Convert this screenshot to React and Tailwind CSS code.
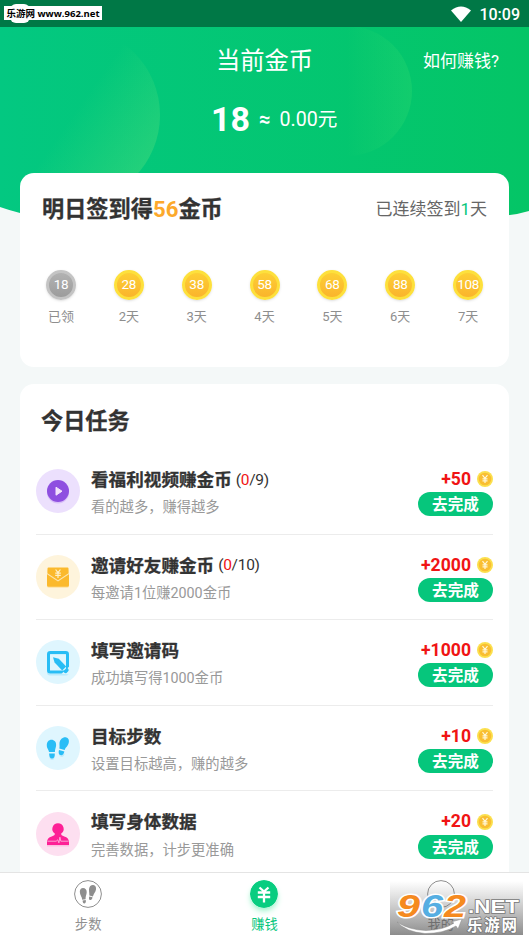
import React from "react";

const days = [
  { coins: 18, label: "已领", claimed: true },
  { coins: 28, label: "2天" },
  { coins: 38, label: "3天" },
  { coins: 58, label: "4天" },
  { coins: 68, label: "5天" },
  { coins: 88, label: "6天" },
  { coins: 108, label: "7天" },
];

const PlayIcon = () => (
  <svg viewBox="0 0 44 44" className="w-11 h-11">
    <circle cx="22" cy="22" r="22" fill="#ece0fd" />
    <circle cx="22" cy="23.5" r="11" fill="#d9bff8" />
    <circle cx="22" cy="22" r="11" fill="#8e4fe0" />
    <path d="M20 18.200v8l6-4z" fill="#f3e2fc" stroke="#f3e2fc" strokeLinejoin="round" />
  </svg>
);

const EnvelopeIcon = () => (
  <svg viewBox="0 0 44 44" className="w-11 h-11">
    <circle cx="22" cy="22" r="22" fill="#fef4dc" />
    <rect x="11" y="14" width="22" height="19" rx="2" fill="#fde6b0" />
    <path d="M12.500 12.500h19q1 0 1 1v4.800L22 25.200l-10.500-6.900v-4.800q0-1 1-1z" fill="#fbb92c" />
    <path d="M11 19.200l11 7.200 11-7.200v11q0 1.500-1.500 1.500h-19q-1.500 0-1.500-1.500z" fill="#fbb92c" />
    <path d="M19.600 14.500l2.400 3.200 2.400-3.200M22 17.700v5.400M19.200 18.200h5.600M19.200 20.400h5.600" fill="none" stroke="#fff0c8" strokeWidth="1.200" />
  </svg>
);

const EditIcon = () => (
  <svg viewBox="0 0 44 44" className="w-11 h-11">
    <circle cx="22" cy="22" r="22" fill="#dff6fe" />
    <rect x="12" y="13.5" width="20" height="21" rx="2" fill="none" stroke="#b9eafc" strokeWidth="2" />
    <rect x="12.5" y="12.5" width="19" height="19.5" rx="1.800" fill="none" stroke="#28bdf5" strokeWidth="3" />
    <path d="M25.500 33.800l8.500-8 1 9z" fill="#dff6fe" />
    <path d="M17 17.300l5.800 1.500 7.400 7.800-4 3.900-7.600-7.900z" fill="#28bdf5" />
    <path d="M27 31.500l4-3.900 1.300 1.400q1 1.200-.3 2.600l-1.200 1.100q-1.300 1.100-2.400.1z" fill="#28bdf5" />
  </svg>
);

const StepsIcon = () => (
  <svg viewBox="0 0 44 44" className="w-11 h-11">
    <circle cx="22" cy="22" r="22" fill="#dff6fe" />
    <path d="M13.200 30l5.400-.3c.2 2.700-.7 4.400-2.500 4.400s-2.700-1.600-2.900-4.100zM23.600 26.500l5.100 1.200c-.6 2.400-1.900 3.600-3.600 3.100-1.800-.5-2.100-2.100-1.500-4.300z" fill="#bdebfc" />
    <g fill="#29bdf6">
      <path d="M10.800 19.200c0-3.300 2-5.400 4.700-5.400s4.900 2.200 4.600 5.600c-.3 2.800-1.200 3.800-1.200 6.500l-5.900.2c-.1-2.500-2.200-3.400-2.200-6.900z" />
      <path d="M13.100 27.600l5.700-.2c.2 3.200-.9 5.200-2.800 5.200s-2.800-1.900-2.900-5z" />
      <path d="M23.500 16.700c.5-3.500 3.400-6 6.400-5.500 2.600.5 3.600 3 2.800 5.700-1.100 3.700-3.300 4.300-4 7.200l-5.400-1.500c.6-2.500 0-3.400.2-5.900z" />
      <path d="M23 24l5.400 1.500c-.6 2.900-2.200 4.200-4 3.600-1.800-.5-2.100-2.500-1.400-5.100z" />
    </g>
  </svg>
);

const BodyIcon = () => (
  <svg viewBox="0 0 44 44" className="w-11 h-11">
    <circle cx="22" cy="22" r="22" fill="#fddff0" />
    <path d="M11 30h22v4.500H11z" fill="#fcbfe0" />
    <path d="M22 11.200a5.700 5.700 0 0 1 3.200 10.400c-.2 1.500.6 2.100 3.100 2.800 3 .9 4.700 2.800 4.700 5.900v2.700H11v-2.700c0-3.100 1.700-5 4.700-5.900 2.500-.7 3.300-1.300 3.100-2.800A5.700 5.700 0 0 1 22 11.200z" fill="#fd2196" />
    <path d="M11.500 29.200h8.700l1.500-1.400 1.200 3 1-5.600.9 4h7.700" fill="none" stroke="#fdc4e2" strokeWidth=".8" />
  </svg>
);

const tasks = [
  { icon: PlayIcon, title: "看福利视频赚金币", total: 9, desc: "看的越多，赚得越多", reward: 50 },
  { icon: EnvelopeIcon, title: "邀请好友赚金币", total: 10, desc: "每邀请1位赚2000金币", reward: 2000 },
  { icon: EditIcon, title: "填写邀请码", desc: "成功填写得1000金币", reward: 1000 },
  { icon: StepsIcon, title: "目标步数", desc: "设置目标越高，赚的越多", reward: 10 },
  { icon: BodyIcon, title: "填写身体数据", desc: "完善数据，计步更准确", reward: 20 },
];

const SmallCoin = () => (
  <svg viewBox="0 0 16 16" className="w-4 h-4">
    <circle cx="8" cy="8" r="8" fill="#fbe04e" />
    <circle cx="8" cy="8" r="6.300" fill="#f9be32" />
    <path d="M5.500 4.200L8 7.300l2.500-3.100M8 7.300v4.700M5.500 7.900h5M5.500 9.800h5" fill="none" stroke="#fff7d8" strokeWidth="1.200" />
  </svg>
);

const DayCoin = ({ coins, label, claimed }) => (
  <div className="flex-1 flex flex-col items-center">
    <div
      className={`w-[30px] h-[30px] rounded-full border-[3px] flex items-center justify-center text-[13.500px] tracking-[-0.3px] leading-none text-white shadow-sm ${
        claimed
          ? "border-[#c4c4c4] bg-linear-to-b from-[#b2b2b2] to-[#9c9c9c]"
          : "border-[#fde03c] bg-linear-to-b from-[#fdcf35] to-[#fab42c]"
      }`}
    >
      {coins}
    </div>
    <span className="mt-[7px] text-[13px] leading-5 text-[#8e8e8e]">{label}</span>
  </div>
);

const TaskRow = ({ icon: Icon, title, total, desc, reward }) => (
  <div className="h-[85.600px] shrink-0 flex items-center border-b border-[#ececec]">
    <Icon />
    <div className="ml-[11px] flex-1 pt-1">
      <div className="h-6 flex items-center whitespace-nowrap text-[#333]">
        <span className="text-[17.600px] font-bold [-webkit-text-stroke:0.3px]">{title}</span>
        {total && (
          <span className="ml-1 text-[15.500px] tracking-[-0.3px]">
            (<span className="text-[#f01414]">0</span>/{total})
          </span>
        )}
      </div>
      <p className="mt-1 h-[22px] text-[14.300px] leading-[22px] text-[#999]">{desc}</p>
    </div>
    <div className="flex flex-col items-end pt-px">
      <div className="h-6 flex items-center gap-1.5">
        <span className="text-[17.600px] font-bold text-[#f01414]">+{reward}</span>
        <SmallCoin />
      </div>
      <button className="mt-px w-[75px] h-6 rounded-full bg-[#06c67c] text-white text-[15.600px] leading-[26px] font-bold">
        去完成
      </button>
    </div>
  </div>
);

const Header = () => (
  <header className="relative h-[190px] text-white">
    <svg viewBox="0 0 529 190" className="absolute inset-0 w-full h-[190px]">
      <defs>
        <linearGradient id="bg" x1="0" x2="1">
          <stop offset="0" stopColor="#03c881" />
          <stop offset="1" stopColor="#04c566" />
        </linearGradient>
        <linearGradient id="disc" x1=".5" y1=".4" x2="1" y2=".75">
          <stop offset=".1" stopColor="#50dd7c" stopOpacity="0" />
          <stop offset="1" stopColor="#50dd7c" stopOpacity=".45" />
        </linearGradient>
        <linearGradient id="disc2" x1=".5" x2="1">
          <stop offset="0" stopColor="#34dc70" stopOpacity="0" />
          <stop offset="1" stopColor="#34dc70" stopOpacity=".3" />
        </linearGradient>
      </defs>
      <path d="M0 0H529V184Q509 190 480 190H40Q20 187 0 180z" fill="url(#bg)" />
      <circle cx="72" cy="88" r="88" fill="url(#disc)" />
      <circle cx="347" cy="64" r="65" fill="url(#disc2)" />
    </svg>
    <div className="relative grid grid-cols-3 items-center pt-[19px]">
      <h1 className="col-start-2 text-center text-[24.300px] leading-[30px]">当前金币</h1>
      <a className="pr-[30px] text-right text-[17px] leading-[30px]">如何赚钱?</a>
    </div>
    <div className="relative mt-[23px] h-10 pl-[211px] flex items-center">
      <span className="text-[34px] font-bold">18</span>
      <span className="ml-[9px] text-xl font-bold">≈</span>
      <span className="ml-[9px] pt-0.5 text-[19.600px]">0.00元</span>
    </div>
  </header>
);

const TabBar = () => (
  <nav className="h-[69px] shrink-0 bg-white border-t border-[#e4e4e4] flex text-[13.300px] text-[#909090]">
    <div className="flex-1 pt-[7px] flex flex-col items-center">
      <svg viewBox="0 0 28 28" className="w-7 h-7" fill="#8e8e8e">
        <circle cx="14" cy="14" r="13.400" fill="white" stroke="#8e8e8e" />
        <path d="M5.800 11.800c0-2.300 1.300-3.800 3.200-3.800 2.300 0 3.900 1.700 3.700 4.200-.1 2.700-1.300 3.800-1.100 7l-3.400.5c0-3-2.400-4.300-2.400-7.900zM8.600 20.400l3.100-.5c.5 1.900 0 3.200-1.200 3.500-1.200.2-1.800-.9-1.900-3zM15 9.200c.2-2.900 2.100-4.400 4.300-4.200 2.200.2 3 2.100 2.700 4.400-.5 3.200-2.500 4.100-3.100 7l-3.600-1c.2-2.300-.4-3.600-.3-6.200zM15.200 16.400l3.300.9c-.3 2.100-1.200 3.100-2.500 2.700-1.200-.3-1.200-1.900-.8-3.600z" />
      </svg>
      <span className="mt-[7px] leading-5">步数</span>
    </div>
    <div className="flex-1 pt-[7px] flex flex-col items-center text-[#06c67c]">
      <svg viewBox="0 0 28 28" className="w-7 h-7 rounded-full shadow-md shadow-emerald-200">
        <circle cx="14" cy="14" r="14" fill="#08cd80" />
        <path d="M9.500 7.500l4.500 4 4.500-4M14 11.500v11M7.800 12.500h12.400M7.800 17h12.400" fill="none" stroke="white" strokeWidth="2.300" />
      </svg>
      <span className="mt-[7px] leading-5">赚钱</span>
    </div>
    <div className="flex-1 pt-[7px] flex flex-col items-center">
      <svg viewBox="0 0 28 28" className="w-7 h-7">
        <circle cx="14" cy="14" r="13.400" fill="white" stroke="#8e8e8e" />
      </svg>
      <span className="mt-[7px] leading-5 text-[#666]">我的</span>
    </div>
  </nav>
);

const SiteLogo = () => (
  <svg viewBox="0 0 139 60" className="absolute left-[390px] top-[875px] w-[139px] h-[60px]">
    <defs>
      <linearGradient id="shade" x1="0" x2="0" y1="0" y2="1">
        <stop offset=".1" stopColor="#808080" stopOpacity="0" />
        <stop offset="1" stopColor="#707070" stopOpacity=".8" />
      </linearGradient>
    </defs>
    <rect width="133" height="60" fill="url(#shade)" />
    <path d="M7 47q12 8 29 8.500 18-.5 28-7.500l-3-1 11-3-4 10-2-3q-12 7.500-31 7.500-19-1.500-28-11.500z" fill="white" stroke="#888" strokeWidth=".5" />
    <g
      fontFamily="Liberation Sans"
      fontWeight="bold"
      fontStyle="italic"
      fontSize="32"
      paintOrder="stroke"
    >
      <g stroke="white" strokeWidth="3">
        <text x="7" y="42" textLength="23" lengthAdjust="spacingAndGlyphs" fill="#f58a1f">9</text>
        <text x="31" y="42" textLength="22" lengthAdjust="spacingAndGlyphs" fill="#55aee2">6</text>
        <text x="54" y="42" textLength="22" lengthAdjust="spacingAndGlyphs" fill="#f58a1f">2</text>
      </g>
    </g>
    <g fontWeight="bold" fill="white" stroke="#777" strokeWidth="1.500" paintOrder="stroke">
      <text x="78" y="38" fontSize="19" fontFamily="Liberation Sans" textLength="51" lengthAdjust="spacingAndGlyphs">.NET</text>
      <text x="77" y="56" fontSize="15.500" fontFamily="Noto Sans CJK SC" textLength="50">乐游网</text>
    </g>
  </svg>
);

export default function App() {
  return (
    <div className="relative w-[529px] h-[941px] overflow-hidden flex flex-col bg-[#f4f8f8] font-['Roboto','Noto_Sans_CJK_SC',sans-serif]">
      {/* Status bar */}
      <div className="relative h-[27px] shrink-0 bg-[#007846] flex items-center justify-between pl-1 pr-[9px]">
        <span className="absolute left-[10px] top-1 w-5 h-[19px] rounded-md bg-white" />
        <span className="relative w-[98px] h-[14px] mb-0.5 bg-white text-black text-[9.500px] leading-[15px] font-bold text-center whitespace-nowrap font-['Open_Sans','Noto_Sans_CJK_SC',sans-serif]">
          乐游网 www.962.net
        </span>
        <div className="flex items-center gap-2 text-white">
          <svg viewBox="0 0 20 16" className="w-5 h-4">
            <path d="M0 4.500Q10-3.500 20 4.500L10 16z" fill="white" />
          </svg>
          <span className="pt-0.5 text-[16px] font-medium">10:09</span>
        </div>
      </div>

      <Header />

      <main className="relative -mt-11 flex-1 min-h-0 overflow-hidden px-5 flex flex-col">
        {/* Check-in card */}
        <section className="h-[194px] w-[489px] shrink-0 rounded-[14px] bg-white">
          <div className="flex items-center justify-between pt-[22px] pl-[22px] pr-[22px] h-[52px]">
            <h2 className="text-[22.200px] font-bold text-[#333] [-webkit-text-stroke:0.3px]">
              明日签到得<span className="text-[#fca92c] [-webkit-text-stroke:0px]">56</span>金币
            </h2>
            <p className="text-[17px] text-[#666]">
              已连续签到<span className="text-[#06c67c]">1</span>天
            </p>
          </div>
          <div className="mt-[45px] px-[7px] flex">
            {days.map((d) => (
              <DayCoin key={d.coins} {...d} />
            ))}
          </div>
        </section>

        {/* Task list card */}
        <section className="mt-[17px] flex-1 min-h-0 rounded-t-[14px] bg-white pl-4 pr-4 flex flex-col overflow-hidden">
          <h2 className="h-[65px] shrink-0 pt-5 pl-[5px] text-[22.200px] leading-[34px] font-bold text-[#333] [-webkit-text-stroke:0.3px]">
            今日任务
          </h2>
          {tasks.map((task) => (
            <TaskRow key={task.title} {...task} />
          ))}
        </section>
      </main>

      <TabBar />
      <SiteLogo />
    </div>
  );
}
